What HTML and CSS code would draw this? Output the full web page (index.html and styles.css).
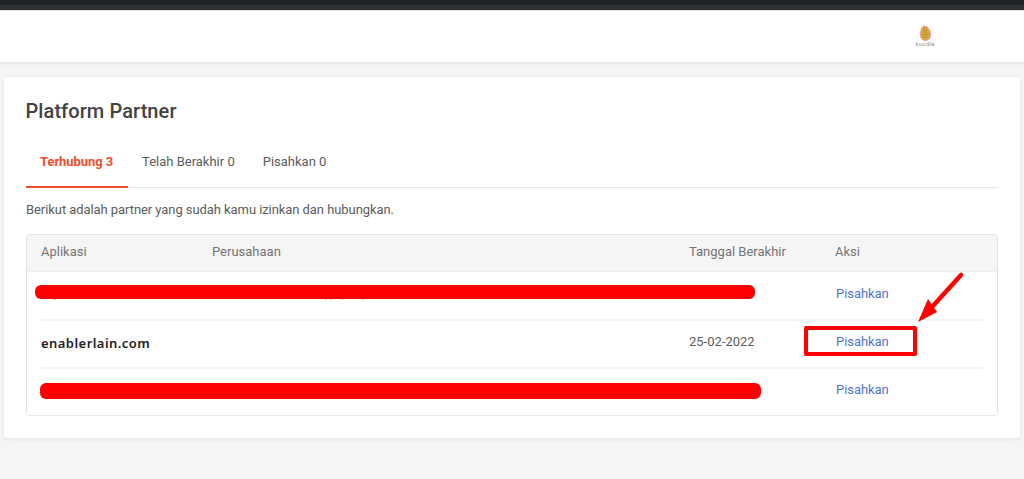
FILE: index.html
```html
<!DOCTYPE html>
<html lang="id">
<head>
<meta charset="utf-8">
<title>Platform Partner</title>
<link rel="stylesheet" href="styles.css">
</head>
<body>
<div class="topstrip"></div>
<header class="header">
  <div class="logo">
    <svg class="logo-mark" width="11" height="16" viewBox="0 0 11 16">
      <path d="M2.500 2.500C2.800 1 4.500.6 5.500 1.500 7 1.200 8 2.200 8 3.500c1.500.8 2.500 3 2.500 6 0 3.500-2 6-5 6s-5-2.500-5-6c0-3 .7-5.500 2-7Z" fill="#d8aa38" stroke="#f48fb1" stroke-width="1"/>
      <path d="M4 3v5M6.500 3.500V8M2.500 9.500h6M3 12h5" stroke="#b98a22" stroke-width=".8" fill="none"/>
    </svg>
    <span class="logo-text">koodle</span>
  </div>
</header>
<main class="main">
  <section class="card">
    <h1 class="title">Platform Partner</h1>
    <nav class="tabs">
      <a class="tab tab-active">Terhubung 3</a>
      <a class="tab">Telah Berakhir 0</a>
      <a class="tab">Pisahkan 0</a>
    </nav>
    <p class="desc">Berikut adalah partner yang sudah kamu izinkan dan hubungkan.</p>
    <div class="table">
      <div class="thead">
        <span>Aplikasi</span>
        <span>Perusahaan</span>
        <span>Tanggal Berakhir</span>
        <span>Aksi</span>
      </div>
      <div class="row row-first">
        <span></span>
        <span></span>
        <span></span>
        <a class="link">Pisahkan</a>
      </div>
      <div class="row">
        <span class="app">enablerlain.com</span>
        <span></span>
        <span class="date">25-02-2022</span>
        <a class="link">Pisahkan</a>
      </div>
      <div class="row row-last">
        <span></span>
        <span></span>
        <span></span>
        <a class="link">Pisahkan</a>
      </div>
    </div>
  </section>
</main>
<svg class="residue" width="340" height="3" viewBox="0 0 340 3">
  <path d="M0 0h1.500v2H0ZM271 0h2v1.500h-2ZM276 0h2v1.500h-2ZM288 0h1.500v1.500H288ZM308 0h1.500v1.500H308Z" fill="#8a8a8a"/>
</svg>
<div class="redact redact-one"></div>
<div class="redact redact-two"></div>
<div class="highlight"></div>
<svg class="arrow" width="50" height="60" viewBox="0 0 50 60">
  <path d="M44 5 15 37" stroke="#f00" stroke-width="4.500" stroke-linecap="round" fill="none"/>
  <path d="M1 52 11 29 20 42Z" fill="#f00"/>
</svg>
</body>
</html>
```
FILE: styles.css
```css
* { box-sizing: border-box; }
html, body { margin: 0; height: 100%; }
body {
  background: #f5f5f5;
  font-family: Roboto, "Liberation Sans", sans-serif;
  color: #555;
  font-size: 14px;
  overflow: hidden;
  position: relative;
}
.topstrip {
  height: 10px;
  background: linear-gradient(#212226 0 5px, #2e3235 5px);
}
.header {
  height: 52px;
  background: #fff;
  border-top: 1px solid #e4e4e4;
  box-shadow: 0 1px 3px rgba(0,0,0,.1);
  display: flex;
  justify-content: flex-end;
  padding-right: 89px;
}
.logo {
  width: 20px;
  margin-top: 14px;
  display: flex;
  flex-direction: column;
  align-items: center;
}
.logo-mark { display: block; }
.logo-text {
  font-size: 6px;
  line-height: 5px;
  color: #9a9488;
  letter-spacing: .2px;
}
.main { padding: 15px 4px 0; }
.card {
  height: 361px;
  background: #fff;
  padding: 0 22px;
  border-radius: 2px;
  box-shadow: 0 1px 4px rgba(0,0,0,.08);
  display: flow-root;
}
.title {
  margin: 21px 0 0 -.5px;
  font-size: 20px;
  line-height: 26px;
  font-weight: 500;
  letter-spacing: .08px;
  color: #424242;
}
.tabs {
  display: flex;
  margin-top: 24px;
  height: 40px;
  border-bottom: 1px solid #e5e5e5;
}
.tab {
  display: block;
  height: 40px;
  padding: 0 14px;
  line-height: 27px;
  font-size: 13px;
  color: #5c5c5c;
}
.tab-active {
  color: #ee4d2d;
  font-weight: 700;
  border-bottom: 2px solid #ee4d2d;
  width: 102px;
  white-space: nowrap;
  letter-spacing: -.05px;
}
.desc {
  margin: 13px 0 0;
  font-size: 13px;
  line-height: 17px;
  color: #5c5c5c;
  letter-spacing: -.07px;
}
.table {
  margin-top: 16px;
  height: 182px;
  border: 1px solid #e5e5e5;
  border-radius: 3px;
  background: #fff;
  font-size: 13px;
}
.thead, .row {
  display: grid;
  grid-template-columns: 171px 477px 146px 1fr;
  align-items: center;
  margin: 0 14px;
}
.thead {
  margin: 0;
  padding: 0 14px 4px;
  height: 37px;
  background: #f5f5f5;
  color: #757575;
  border-bottom: 1px solid #eee;
  border-radius: 3px 3px 0 0;
}
.row {
  height: 48px;
  padding-bottom: 6px;
  border-bottom: 2px solid #f5f5f5;
}
.row-first {
  height: 49px;
  padding-bottom: 5px;
}
.row-last {
  border-bottom: 0;
  padding-bottom: 8px;
}
.app {
  font-family: "Noto Sans", Roboto, sans-serif;
  font-weight: 600;
  font-size: 13px;
  letter-spacing: .45px;
  color: #222;
  padding-top: 4px;
}
.date { color: #5c5c5c; }
.link {
  color: #4f76d0;
  padding-left: 1px;
  letter-spacing: -.05px;
}
.residue {
  position: absolute;
  left: 54px; top: 298px;
}
.redact {
  position: absolute;
  background: #f00;
}
.redact-one {
  left: 35px; top: 285px;
  width: 720px; height: 14px;
  border-radius: 6px;
}
.redact-two {
  left: 40px; top: 383px;
  width: 721px; height: 16px;
  border-radius: 6px;
}
.highlight {
  position: absolute;
  left: 804px; top: 326px;
  width: 113px; height: 30px;
  border: 4px solid #f00;
  border-radius: 2px;
}
.arrow {
  position: absolute;
  left: 917px; top: 270px;
}
```
